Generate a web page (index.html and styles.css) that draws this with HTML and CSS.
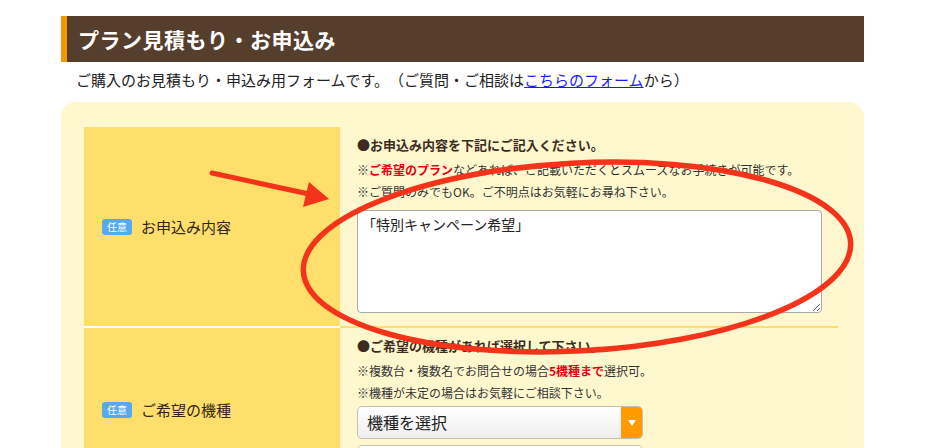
FILE: index.html
```html
<!DOCTYPE html>
<html lang="ja">
<head>
    <meta charset="UTF-8">
    <meta name="viewport" content="width=device-width, initial-scale=1.0">
    <title>プラン見積もり・お申込み</title>
    <link rel="stylesheet" href="styles.css">
</head>
<body>
    <div class="wrap">
        <h1 class="page-title">プラン見積もり・お申込み</h1>
        <p class="intro">ご購入のお見積もり・申込み用フォームです。（ご質問・ご相談は<a href="#">こちらのフォーム</a>から）</p>

        <div class="form-panel">
            <div class="form-row">
                <div class="form-label">
                    <span class="badge">任意</span>
                    <span class="label-text">お申込み内容</span>
                </div>
                <div class="form-body">
                    <p class="field-head">●お申込み内容を下記にご記入ください。</p>
                    <p class="note note-first">※<span class="em">ご希望のプラン</span>などあれば、ご記載いただくとスムーズなお手続きが可能です。</p>
                    <p class="note">※ご質問のみでもOK。ご不明点はお気軽にお尋ね下さい。</p>
                    <textarea class="textbox">「特別キャンペーン希望」</textarea>
                </div>
            </div>

            <div class="form-row">
                <div class="form-label">
                    <span class="badge">任意</span>
                    <span class="label-text">ご希望の機種</span>
                </div>
                <div class="form-body">
                    <p class="field-head">●ご希望の機種があれば選択して下さい。</p>
                    <p class="note note-first">※複数台・複数名でお問合せの場合<span class="em">5機種まで</span>選択可。</p>
                    <p class="note">※機種が未定の場合はお気軽にご相談下さい。</p>
                    <div class="select">
                        <span class="select-text">機種を選択</span>
                        <span class="select-btn"></span>
                    </div>
                    <div class="select select-next"></div>
                </div>
            </div>
        </div>
    </div>

    <!-- 注釈（矢印と丸囲み） -->
    <svg class="markup" width="925" height="448" viewBox="0 0 925 448">
        <line x1="212" y1="173" x2="309" y2="194" stroke="#f5331a" stroke-width="5" stroke-linecap="round"/>
        <polygon points="329,199 309,182 303,207" fill="#f5331a"/>
        <ellipse cx="577" cy="257" rx="274" ry="94" transform="rotate(-3 577 257)" fill="none" stroke="#f5331a" stroke-width="5.5"/>
    </svg>
</body>
</html>
```

FILE: styles.css
```css
* {
    box-sizing: border-box;
}

body {
    margin: 0;
    font-family: "Noto Sans CJK JP", "Noto Sans", sans-serif;
    color: #222;
    background: #fff;
    text-spacing-trim: space-all; /* 約物を詰めない */
}

p {
    margin: 0;
}

.wrap {
    width: 803px;
    margin: 16px auto 0;
}

/* タイトルバー */
.page-title {
    margin: 0;
    height: 46px;
    line-height: 46px;
    padding-left: 11px;
    border-left: 6px solid #f39800;
    background-color: #563e2c;
    color: #fff;
    font-size: 21px;
    font-weight: bold;
    letter-spacing: 0.5px;
}

.intro {
    margin: 7px 0 11px;
    padding-left: 15px;
    font-size: 15px;
    line-height: 22px;
    color: #222;
}

.intro a {
    color: #1a1aff;
}

/* フォーム外枠 */
.form-panel {
    background-color: #fff8cf;
    border-radius: 15px;
    padding: 25px 26px 0 23px;
}

.form-row {
    display: grid;
    grid-template-columns: 256px 1fr;
}

.form-row + .form-row .form-label,
.form-row + .form-row .form-body {
    border-top: 2px solid #fff;
}

.form-row + .form-row .form-body {
    border-top-color: #ffdf6b;
}

.form-label {
    background-color: #ffdf6b;
    display: flex;
    align-items: center;
    gap: 9px;
    padding-left: 18px;
}

.badge {
    display: inline-block;
    width: 30px;
    height: 16px;
    line-height: 16px;
    border-radius: 3px;
    background-color: #55aaf2;
    color: #fff;
    font-size: 10px;
    text-align: center;
}

.label-text {
    font-size: 15px;
    color: #33251a;
}

.form-body {
    padding: 8px 16px 13px 17px;
}

.field-head {
    font-size: 13px;
    font-weight: bold;
    line-height: 20px;
    color: #3d2b1f;
}

.note {
    font-size: 12px;
    line-height: 22px;
    color: #333;
}

.note-first {
    margin-top: 4px;
}

.em {
    color: #e60012;
    font-weight: bold;
}

.textbox {
    display: block;
    width: 465px;
    height: 103px;
    margin-top: 7px;
    padding: 4px 4px;
    border: 1px solid #aaa;
    border-radius: 4px;
    background: #fff;
    font-family: "Noto Sans CJK JP", sans-serif;
    font-size: 14px;
    line-height: 18px;
    color: #222;
}

/* セレクト風ボックス */
.select {
    display: flex;
    width: 286px;
    height: 33px;
    margin-top: 2px;
    border: 1px solid #c4bfae;
    border-radius: 5px;
    background: linear-gradient(#ffffff, #eeeeee);
    overflow: hidden;
}

.select-next {
    margin-top: 6px;
}

.select-text {
    flex: 1;
    padding-left: 9px;
    font-size: 16px;
    line-height: 31px;
    color: #222;
}

.select-btn {
    width: 21px;
    background-color: #ff9a00;
    display: flex;
    align-items: center;
    justify-content: center;
}

.select-btn::after {
    content: "";
    border-left: 4px solid transparent;
    border-right: 4px solid transparent;
    border-top: 6px solid #fff;
}

.markup {
    position: absolute;
    left: 0;
    top: 0;
    pointer-events: none;
}
```
